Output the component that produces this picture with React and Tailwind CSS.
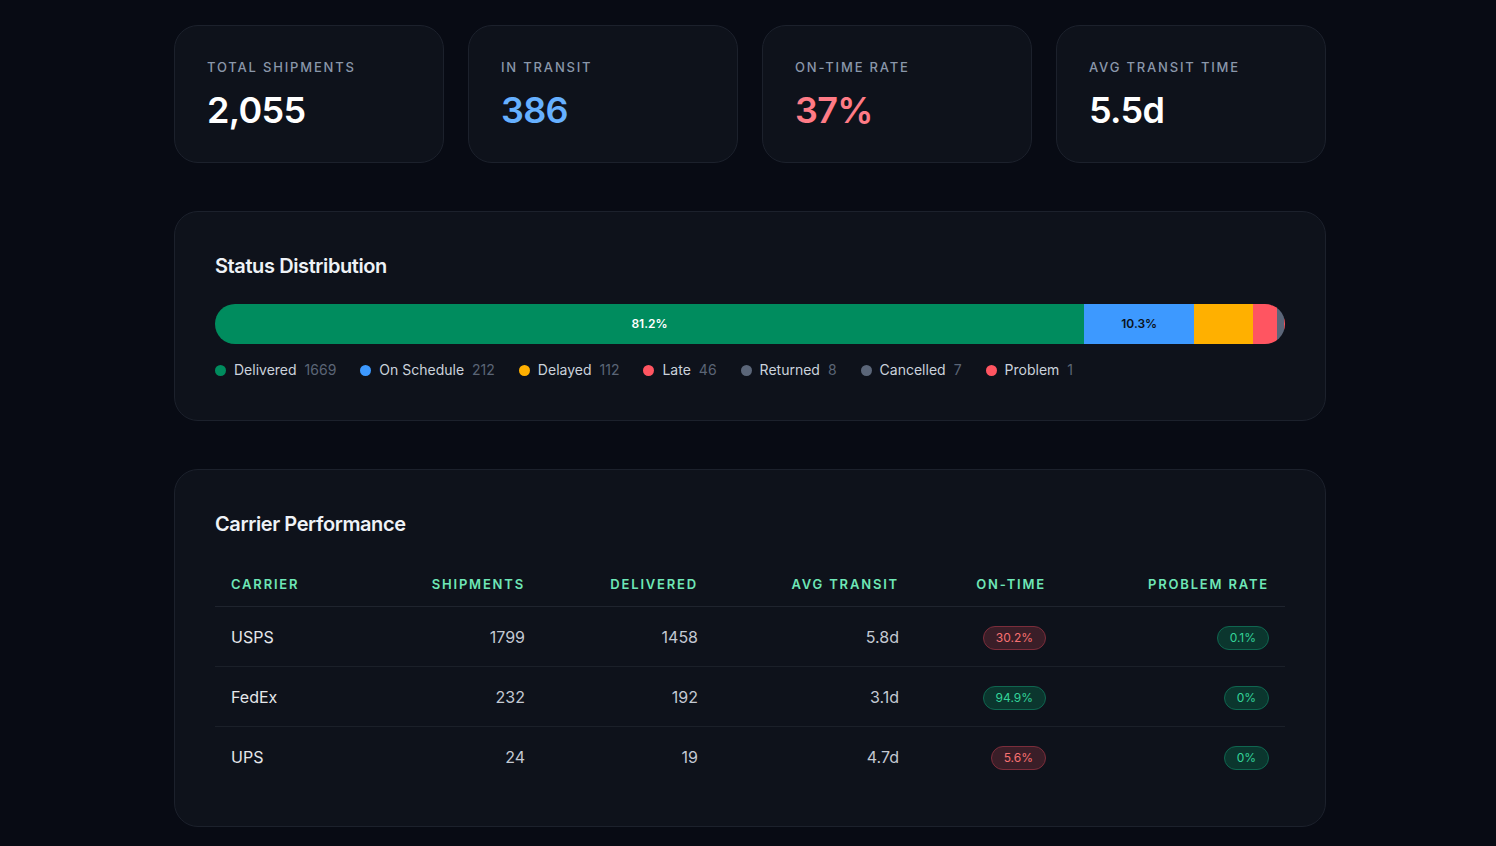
const stats = [
  { label: 'Total Shipments', value: '2,055', color: 'text-white' },
  { label: 'In Transit', value: '386', color: 'text-[#66b0ff]' },
  { label: 'On-Time Rate', value: '37%', color: 'text-[#ff7b86]' },
  { label: 'Avg Transit Time', value: '5.5d', color: 'text-white' },
]

const statuses = [
  { name: 'Delivered', count: 1669, color: 'bg-[#008c5e]', text: 'text-white' },
  { name: 'On Schedule', count: 212, color: 'bg-[#3d99ff]', text: 'text-[#0b1220]' },
  { name: 'Delayed', count: 112, color: 'bg-[#ffb000]', text: 'text-[#0b1220]' },
  { name: 'Late', count: 46, color: 'bg-[#ff5561]', text: 'text-white' },
  { name: 'Returned', count: 8, color: 'bg-[#5b6679]', text: 'text-white' },
  { name: 'Cancelled', count: 7, color: 'bg-[#5b6679]', text: 'text-white' },
  { name: 'Problem', count: 1, color: 'bg-[#ff5561]', text: 'text-white' },
]

const total = statuses.reduce((s, x) => s + x.count, 0)

const carriers = [
  { name: 'USPS', shipments: 1799, delivered: 1458, avg: '5.8d', onTime: '30.2%', onGood: false, problem: '0.1%' },
  { name: 'FedEx', shipments: 232, delivered: 192, avg: '3.1d', onTime: '94.9%', onGood: true, problem: '0%' },
  { name: 'UPS', shipments: 24, delivered: 19, avg: '4.7d', onTime: '5.6%', onGood: false, problem: '0%' },
]

const Badge = ({ good, children }) => (
  <span
    className={
      'inline-flex h-6 items-center rounded-full border px-3 text-[12px] ' +
      (good
        ? 'bg-[#0b362e] border-[#0f6650] text-[#34d399]'
        : 'bg-[#3a1e28] border-[#7c2d3b] text-[#f87171]')
    }
  >
    {children}
  </span>
)

const cols = 'grid grid-cols-[160px_166px_173px_201px_147px_1fr]'

export default function App() {
  return (
    <div
      className="min-h-screen bg-[#080b14] pl-[4px] pt-[25px] pb-10"
      style={{ fontFamily: 'Inter, "Noto Sans", sans-serif' }}
    >
      <div className="mx-auto w-[1152px] flex flex-col gap-12">
        <div className="grid grid-cols-4 gap-6">
          {stats.map((s) => (
            <div key={s.label} className="rounded-3xl border border-[#1c212c] bg-[#0e121b] p-8">
              <div className="text-[13px] leading-[18px] font-medium uppercase tracking-[0.14em] text-[#8a97aa]">
                {s.label}
              </div>
              <div className={'mt-3.5 text-[36px] leading-10 font-semibold tracking-[-0.02em] ' + s.color}>{s.value}</div>
            </div>
          ))}
        </div>

        <div className="rounded-3xl border border-[#1c212c] bg-[#0e121b] p-10">
          <h2 className="text-[20px] leading-7 font-semibold tracking-[-0.02em] text-[#eef2f7]">Status Distribution</h2>
          <div className="mt-6 flex h-10 w-full overflow-hidden rounded-full">
            {statuses.map((s) => {
              const pct = (s.count / total) * 100
              return (
                <div
                  key={s.name}
                  className={'flex h-full items-center justify-center text-[12px] font-semibold ' + s.color + ' ' + s.text}
                  style={{ width: pct + '%' }}
                >
                  {pct > 10 ? pct.toFixed(1) + '%' : ''}
                </div>
              )
            })}
          </div>
          <div className="mt-4 flex items-center gap-6 text-[14px] leading-5">
            {statuses.map((s) => (
              <div key={s.name} className="flex items-center">
                <span className={'mr-2 h-[11px] w-[11px] rounded-full ' + s.color} />
                <span className="text-[#cbd2dc]">{s.name}</span>
                <span className="ml-2 text-[#5b6576]">{s.count}</span>
              </div>
            ))}
          </div>
        </div>

        <div className="rounded-3xl border border-[#1c212c] bg-[#0e121b] px-10 pt-10 pb-[39px]">
          <h2 className="text-[20px] leading-7 font-semibold tracking-[-0.02em] text-[#eef2f7]">Carrier Performance</h2>
          <div className="mt-6">
            <div className={cols + ' h-[45px] pt-[2px] items-center border-b border-[#1f242e] text-[13px] font-semibold uppercase tracking-[0.14em] text-[#6ee7b7]'}>
              <div className="px-4">Carrier</div>
              <div className="px-4 text-right">Shipments</div>
              <div className="px-4 text-right">Delivered</div>
              <div className="px-4 text-right">Avg Transit</div>
              <div className="px-4 text-right">On-Time</div>
              <div className="px-4 text-right">Problem Rate</div>
            </div>
            {carriers.map((c, i) => (
              <div
                key={c.name}
                className={cols + ' h-[60px] items-center text-[16px] ' + (i < carriers.length - 1 ? 'border-b border-[#1b2029]' : '')}
              >
                <div className="px-4 text-[#e5e7eb]">{c.name}</div>
                <div className="px-4 text-right text-[#c3c9d3]">{c.shipments}</div>
                <div className="px-4 text-right text-[#c3c9d3]">{c.delivered}</div>
                <div className="px-4 text-right text-[#c3c9d3]">{c.avg}</div>
                <div className="px-4 text-right">
                  <Badge good={c.onGood}>{c.onTime}</Badge>
                </div>
                <div className="px-4 text-right">
                  <Badge good>{c.problem}</Badge>
                </div>
              </div>
            ))}
          </div>
        </div>
      </div>
    </div>
  )
}
